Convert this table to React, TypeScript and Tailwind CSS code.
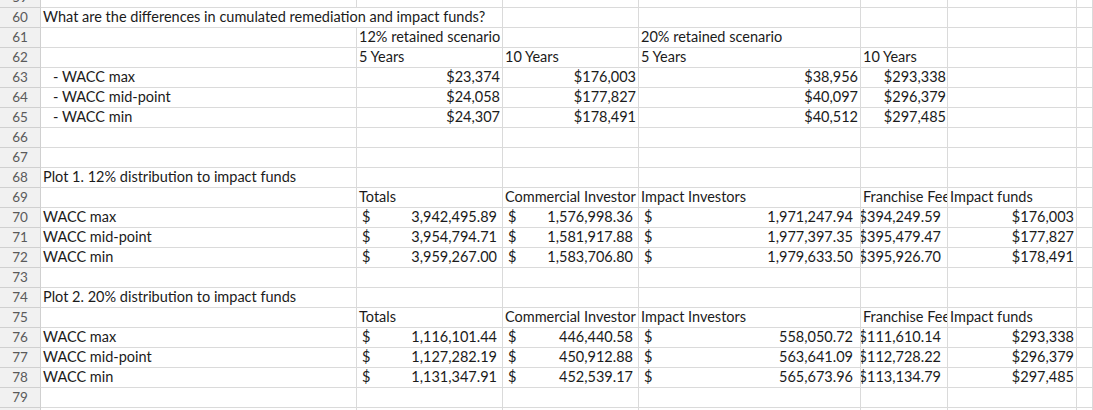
import React from "react";

type C = { t?: string; k?: "l" | "r" | "a"; w: string; pl?: string; pr?: string };

const W = {
  A: "w-[316px]",
  B: "w-[146px]",
  C: "w-[136px]",
  D: "w-[222px]",
  E: "w-[87px]",
  F: "w-[129px]",
  G: "flex-1",
  AB: "w-[462px]",
};

const empty = (w: string): C => ({ w });

const blankRow = (): C[] => [W.A, W.B, W.C, W.D, W.E, W.F, W.G].map(empty);

const topRow = (label: string, b: string, c: string, d: string, e: string): C[] => [
  { t: label, k: "l", w: W.A, pl: "pl-[12px]" },
  { t: b, k: "r", w: W.B, pr: "pr-[2px]" },
  { t: c, k: "r", w: W.C, pr: "pr-[2px]" },
  { t: d, k: "r", w: W.D, pr: "pr-[2px]" },
  { t: e, k: "r", w: W.E, pr: "pr-[1px]" },
  empty(W.F),
  empty(W.G),
];

const acctRow = (label: string, b: string, c: string, d: string, e: string, f: string): C[] => [
  { t: label, k: "l", w: W.A },
  { t: b, k: "a", w: W.B, pr: "pr-[5px]" },
  { t: c, k: "a", w: W.C, pr: "pr-[5px]" },
  { t: d, k: "a", w: W.D, pr: "pr-[7px]" },
  { t: e, k: "r", w: W.E, pr: "pr-[6px]" },
  { t: f, k: "r", w: W.F, pr: "pr-[2px]" },
  empty(W.G),
];

const headRow = (): C[] => [
  empty(W.A),
  { t: "Totals", k: "l", w: W.B },
  { t: "Commercial Investor", k: "l", w: W.C },
  { t: "Impact Investors", k: "l", w: W.D },
  { t: "Franchise Fees", k: "l", w: W.E },
  { t: "Impact funds", k: "l", w: W.F },
  empty(W.G),
];

const rows: [number, C[]][] = [
  [59, blankRow()],
  [
    60,
    [
      { t: "What are the differences in cumulated remediation and impact funds?", k: "l", w: W.AB },
      empty(W.C),
      empty(W.D),
      empty(W.E),
      empty(W.F),
      empty(W.G),
    ],
  ],
  [
    61,
    [
      empty(W.A),
      { t: "12% retained scenario", k: "l", w: W.B },
      empty(W.C),
      { t: "20% retained scenario", k: "l", w: W.D },
      empty(W.E),
      empty(W.F),
      empty(W.G),
    ],
  ],
  [
    62,
    [
      empty(W.A),
      { t: "5 Years", k: "l", w: W.B },
      { t: "10 Years", k: "l", w: W.C },
      { t: "5 Years", k: "l", w: W.D },
      { t: "10 Years", k: "l", w: W.E },
      empty(W.F),
      empty(W.G),
    ],
  ],
  [63, topRow("- WACC max", "$23,374", "$176,003", "$38,956", "$293,338")],
  [64, topRow("- WACC mid-point", "$24,058", "$177,827", "$40,097", "$296,379")],
  [65, topRow("- WACC min", "$24,307", "$178,491", "$40,512", "$297,485")],
  [66, blankRow()],
  [67, blankRow()],
  [
    68,
    [
      { t: "Plot 1. 12% distribution to impact funds", k: "l", w: W.A },
      empty(W.B),
      empty(W.C),
      empty(W.D),
      empty(W.E),
      empty(W.F),
      empty(W.G),
    ],
  ],
  [69, headRow()],
  [70, acctRow("WACC max", "3,942,495.89", "1,576,998.36", "1,971,247.94", "$394,249.59", "$176,003")],
  [71, acctRow("WACC mid-point", "3,954,794.71", "1,581,917.88", "1,977,397.35", "$395,479.47", "$177,827")],
  [72, acctRow("WACC min", "3,959,267.00", "1,583,706.80", "1,979,633.50", "$395,926.70", "$178,491")],
  [73, blankRow()],
  [
    74,
    [
      { t: "Plot 2. 20% distribution to impact funds", k: "l", w: W.A },
      empty(W.B),
      empty(W.C),
      empty(W.D),
      empty(W.E),
      empty(W.F),
      empty(W.G),
    ],
  ],
  [75, headRow()],
  [76, acctRow("WACC max", "1,116,101.44", "446,440.58", "558,050.72", "$111,610.14", "$293,338")],
  [77, acctRow("WACC mid-point", "1,127,282.19", "450,912.88", "563,641.09", "$112,728.22", "$296,379")],
  [78, acctRow("WACC min", "1,131,347.91", "452,539.17", "565,673.96", "$113,134.79", "$297,485")],
  [79, blankRow()],
  [80, blankRow()],
];

function Cell({ c }: { c: C }) {
  const base = `${c.w} shrink-0 h-full border-r border-b border-[#dadada] overflow-hidden whitespace-nowrap flex items-end pb-[1px]`;
  if (!c.t) return <div className={base} />;
  if (c.k === "a") {
    return (
      <div className={`${base} justify-between pl-[5px] ${c.pr ?? ""}`}>
        <span>$</span>
        <span>{c.t}</span>
      </div>
    );
  }
  if (c.k === "r") {
    return <div className={`${base} justify-end ${c.pr ?? "pr-[2px]"}`}>{c.t}</div>;
  }
  return <div className={`${base} ${c.pl ?? "pl-[2px]"}`}>{c.t}</div>;
}

export default function App() {
  return (
    <div
      className="w-[1093px] h-[410px] overflow-hidden bg-white text-[#1b1b1b] text-[14.5px] leading-[18px]"
      style={{ fontFamily: "Lato, 'Open Sans', sans-serif" }}
    >
      <div className="-mt-[12px] flex flex-col">
        {rows.map(([n, cells]) => (
          <div key={n} className="flex h-[20px]">
            <div className="w-[41px] shrink-0 h-full bg-[#f1f1f1] border-r border-b border-[#d0d0d0] flex items-end justify-center pb-[1px] text-[#5a5a5a] text-[13.5px]">
              {n}
            </div>
            {cells.map((c, i) => (
              <Cell key={i} c={c} />
            ))}
          </div>
        ))}
      </div>
    </div>
  );
}
